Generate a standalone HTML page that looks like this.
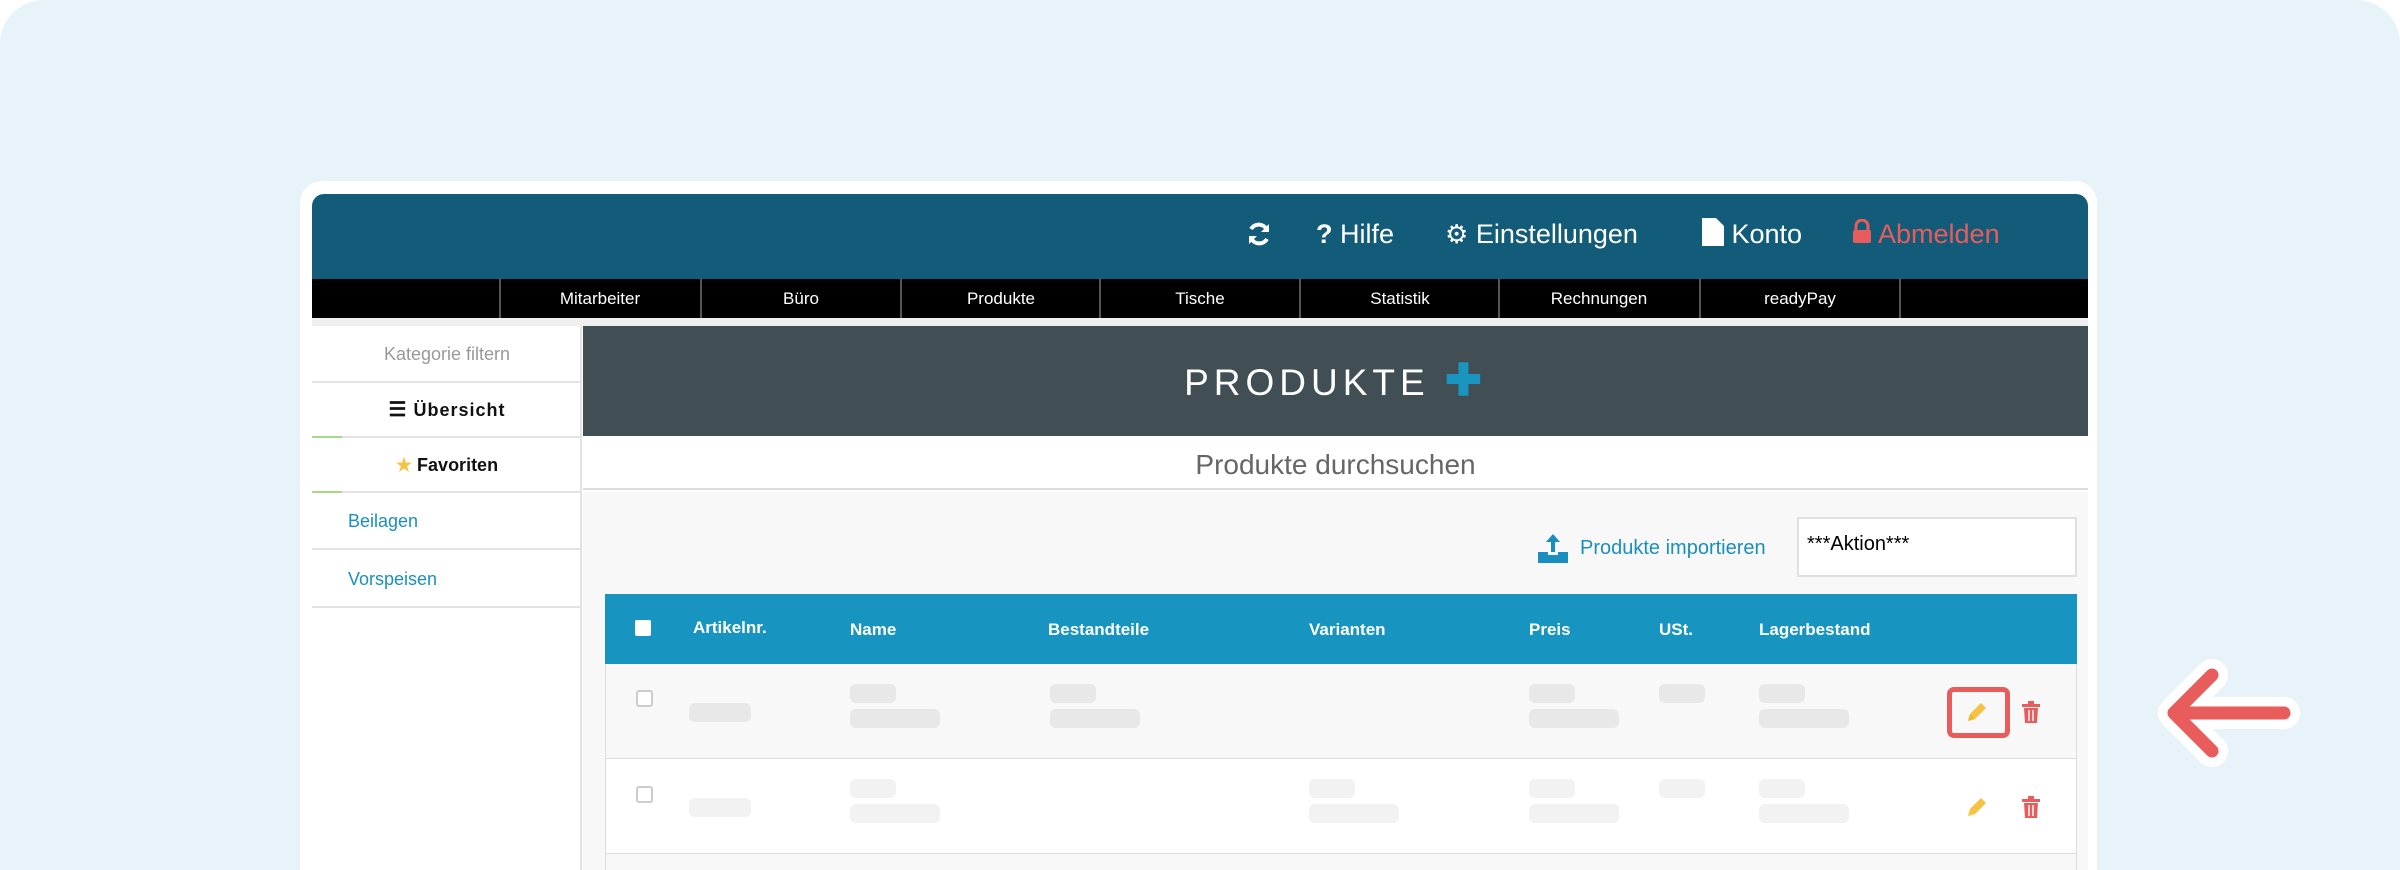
<!DOCTYPE html>
<html><head><meta charset="utf-8"><style>
*{margin:0;padding:0;box-sizing:border-box}
html,body{width:2400px;height:870px;overflow:hidden}
body{background:#fff;font-family:"Liberation Sans",sans-serif;position:relative}
.bg{position:absolute;left:0;top:0;width:2400px;height:870px;background:#e7f3f9;border-radius:44px 44px 0 0}
.card{position:absolute;left:300px;top:181px;width:1797px;height:689px;background:#fff;border-radius:22px 22px 0 0}
.hdr{position:absolute;left:312px;top:194px;width:1776px;height:85px;background:#135c79;border-radius:12px 12px 0 0}
.hi{position:absolute;top:218px;color:#fff;font-size:27px;line-height:32px;white-space:nowrap}
.nav{position:absolute;left:312px;top:279px;width:1776px;height:39px;background:#000}
.nav div{position:absolute;top:0;height:39px;width:200px;border-left:2px solid #555;color:#fff;font-size:17px;text-align:center;line-height:39px}
.strip{position:absolute;left:312px;top:318px;width:1776px;height:8px;background:#efefef}
.side{position:absolute;left:312px;top:326px;width:270px;height:544px;background:#fff;border-right:2px solid #e3e3e3}
.si{position:absolute;left:0;width:270px;border-bottom:2px solid #e3e3e3;font-size:18px}
.banner{position:absolute;left:583px;top:326px;width:1505px;height:110px;background:#414f55;color:#fff;text-align:center;font-size:37px;letter-spacing:5px;line-height:110px}
.search{position:absolute;left:583px;top:436px;width:1505px;height:54px;background:#fff;border-bottom:2px solid #ddd;text-align:center;color:#666;font-size:28px;line-height:58px}
.gray{position:absolute;left:583px;top:492px;width:1505px;height:378px;background:#f8f8f8}
.th{position:absolute;top:594px;left:605px;width:1472px;height:70px;background:#1794c0}
.tht{position:absolute;top:620px;color:#fff;font-weight:bold;font-size:17px}
.row{position:absolute;left:605px;width:1472px;border:1px solid #ddd;border-top:none}
.ph{position:absolute;height:19px;border-radius:6px}
.cb{position:absolute;width:17px;height:17px;border:2px solid #ccc;border-radius:3px;background:#fff}
</style></head><body>
<div class="bg"></div>
<div class="card"></div>
<div class="hdr"></div>
<svg style="position:absolute;left:1246px;top:221px" width="26" height="26" viewBox="0 0 26 26"><path d="M21 9A9 9 0 0 0 5 8M5 17a9 9 0 0 0 16 1" stroke="#fff" stroke-width="4" fill="none"/><path d="M23 3v8h-8zM3 23v-8h8z" fill="#fff"/></svg>
<div class="hi" style="left:1316px"><b>?</b> Hilfe</div>
<div class="hi" style="left:1445px"><span style="font-size:26px">⚙</span> Einstellungen</div>
<div class="hi" style="left:1702px"><svg width="22" height="28" viewBox="0 0 22 28" style="vertical-align:-3px"><path d="M0 0h14l8 8v20H0z" fill="#fff"/></svg> Konto</div>
<div class="hi" style="left:1852px;color:#e85c5c"><svg width="20" height="26" viewBox="0 0 20 26" style="vertical-align:-2px"><path d="M4 11V7a6 6 0 0 1 12 0v4" stroke="#e85c5c" stroke-width="3" fill="none"/><rect x="1" y="11" width="18" height="13" rx="2" fill="#e85c5c"/></svg> Abmelden</div>
<div class="nav">
<div style="left:187px">Mitarbeiter</div><div style="left:388px">Büro</div><div style="left:588px">Produkte</div><div style="left:787px">Tische</div><div style="left:987px">Statistik</div><div style="left:1186px">Rechnungen</div><div style="left:1387px">readyPay</div><div style="left:1587px;width:2px"></div>
</div>
<div class="strip"></div>
<div class="side">
<div class="si" style="top:0;height:57px;line-height:57px;text-align:center;color:#999">Kategorie filtern</div>
<div class="si" style="top:57px;height:55px;line-height:55px;text-align:center;font-weight:bold;color:#111;letter-spacing:1px"><span style="font-size:20px">☰</span> Übersicht</div>
<div style="position:absolute;left:0;top:110px;width:30px;height:2px;background:#a7d98a"></div>
<div class="si" style="top:112px;height:55px;line-height:55px;text-align:center;font-weight:bold;color:#111"><span style="color:#f5c242">★</span> Favoriten</div>
<div style="position:absolute;left:0;top:165px;width:30px;height:2px;background:#a7d98a"></div>
<div class="si" style="top:167px;height:57px;line-height:57px;padding-left:36px;color:#1a8fbf">Beilagen</div>
<div class="si" style="top:224px;height:58px;line-height:58px;padding-left:36px;color:#1a8fbf">Vorspeisen</div>
</div>
<div class="banner">PRODUKTE <span style="color:#1a95c0;font-weight:bold;font-size:44px">✚</span></div>
<div class="search">Produkte durchsuchen</div>
<div class="gray"></div>
<svg style="position:absolute;left:1537px;top:532px" width="32" height="32" viewBox="0 0 32 32"><path d="M16 2l-7 8h5v10h4V10h5z" fill="#1a8fbf"/><path d="M1 20h10v3h10v-3h10v11H1z" fill="#1a8fbf"/></svg>
<div style="position:absolute;left:1580px;top:537px;color:#1a8fbf;font-size:20px">Produkte importieren</div>
<div style="position:absolute;left:1797px;top:517px;width:280px;height:60px;background:#fff;border:2px solid #e0e0e0;font-size:20px;padding:14px 8px">***Aktion***</div>
<div class="th"></div>
<div style="position:absolute;left:635px;top:620px;width:16px;height:16px;background:#fff;border-radius:2px"></div>
<div class="tht" style="left:693px;top:618px">Artikelnr.</div>
<div class="tht" style="left:850px">Name</div>
<div class="tht" style="left:1048px">Bestandteile</div>
<div class="tht" style="left:1309px">Varianten</div>
<div class="tht" style="left:1529px">Preis</div>
<div class="tht" style="left:1659px">USt.</div>
<div class="tht" style="left:1759px">Lagerbestand</div>
<div class="row" style="top:664px;height:95px;background:#f8f8f8"></div>
<div class="row" style="top:759px;height:95px;background:#fff"></div>
<div class="row" style="top:854px;height:16px;background:#f8f8f8;border-bottom:none"></div>
<div class="cb" style="left:636px;top:690px"></div>
<div class="cb" style="left:636px;top:786px"></div>
<div class="ph" style="left:689px;top:703px;width:62px;background:#e8e8e8"></div>
<div class="ph" style="left:850px;top:684px;width:46px;background:#e8e8e8"></div>
<div class="ph" style="left:850px;top:709px;width:90px;background:#e8e8e8"></div>
<div class="ph" style="left:1050px;top:684px;width:46px;background:#e8e8e8"></div>
<div class="ph" style="left:1050px;top:709px;width:90px;background:#e8e8e8"></div>
<div class="ph" style="left:1529px;top:684px;width:46px;background:#e8e8e8"></div>
<div class="ph" style="left:1529px;top:709px;width:90px;background:#e8e8e8"></div>
<div class="ph" style="left:1659px;top:684px;width:46px;background:#e8e8e8"></div>
<div class="ph" style="left:1759px;top:684px;width:46px;background:#e8e8e8"></div>
<div class="ph" style="left:1759px;top:709px;width:90px;background:#e8e8e8"></div>
<div class="ph" style="left:689px;top:798px;width:62px;background:#f2f2f2"></div>
<div class="ph" style="left:850px;top:779px;width:46px;background:#f2f2f2"></div>
<div class="ph" style="left:850px;top:804px;width:90px;background:#f2f2f2"></div>
<div class="ph" style="left:1309px;top:779px;width:46px;background:#f2f2f2"></div>
<div class="ph" style="left:1309px;top:804px;width:90px;background:#f2f2f2"></div>
<div class="ph" style="left:1529px;top:779px;width:46px;background:#f2f2f2"></div>
<div class="ph" style="left:1529px;top:804px;width:90px;background:#f2f2f2"></div>
<div class="ph" style="left:1659px;top:779px;width:46px;background:#f2f2f2"></div>
<div class="ph" style="left:1759px;top:779px;width:46px;background:#f2f2f2"></div>
<div class="ph" style="left:1759px;top:804px;width:90px;background:#f2f2f2"></div>
<div style="position:absolute;left:1947px;top:687px;width:63px;height:51px;border:5px solid #e85c5c;border-radius:7px"></div>
<svg style="position:absolute;left:1965px;top:700px" width="24" height="24" viewBox="0 0 24 24"><path d="M3 21l2-7L16 3l5 5-11 11z" fill="#f5c242"/><path d="M3 21l2-7 5 5z" fill="#f0b830"/></svg>
<svg style="position:absolute;left:2021px;top:700px" width="20" height="24" viewBox="0 0 20 24"><path d="M1 4h18v3H1zM7 1h6v3H7zM3 8h14l-1 15H4z" fill="#e85c5c"/><path d="M8 10v11M12 10v11" stroke="#f8f8f8" stroke-width="1.5"/></svg>
<svg style="position:absolute;left:1965px;top:795px" width="24" height="24" viewBox="0 0 24 24"><path d="M3 21l2-7L16 3l5 5-11 11z" fill="#f5c242"/></svg>
<svg style="position:absolute;left:2021px;top:795px" width="20" height="24" viewBox="0 0 20 24"><path d="M1 4h18v3H1zM7 1h6v3H7zM3 8h14l-1 15H4z" fill="#e85c5c"/><path d="M8 10v11M12 10v11" stroke="#fff" stroke-width="1.5"/></svg>
<svg style="position:absolute;left:2140px;top:650px" width="180" height="130" viewBox="0 0 180 130"><path d="M72 25L34 63l38 38M34 63h110" stroke="#fff" stroke-width="32" stroke-linecap="round" stroke-linejoin="round" fill="none"/><path d="M72 25L34 63l38 38M34 63h110" stroke="#e85c5c" stroke-width="13" stroke-linecap="round" stroke-linejoin="round" fill="none"/></svg>
</body></html>
